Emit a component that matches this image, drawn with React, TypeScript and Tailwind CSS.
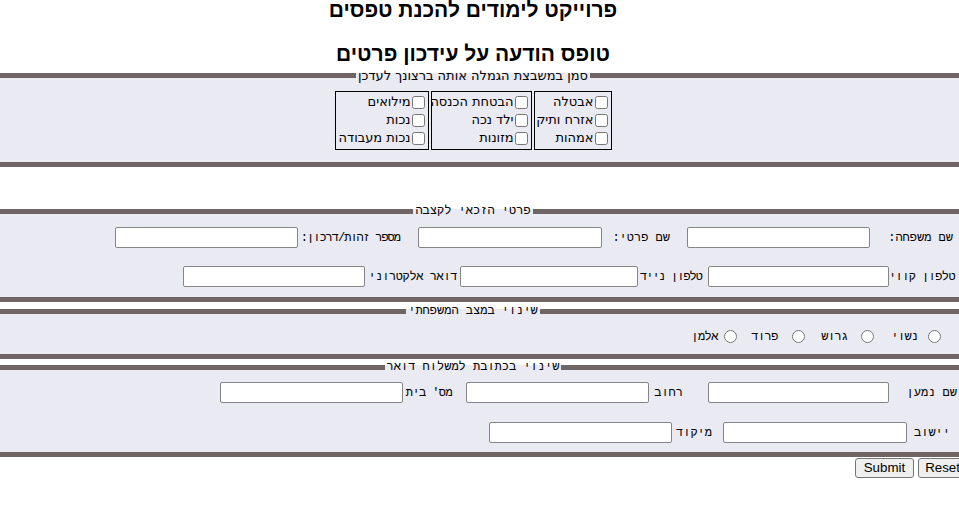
export default function App() {
  return (
    <div className="w-full h-[515px] overflow-hidden bg-white text-black">
      <div dir="rtl" className="w-[1014px] -ml-[34px]">
        <h1 className="-mt-[2px] text-center text-[21px] leading-[24px] font-bold font-['Liberation_Sans',Arial,sans-serif]">
          פרוייקט לימודים להכנת טפסים
        </h1>
        <h2 className="mt-[20px] text-center text-[21px] leading-[24px] font-bold font-['Liberation_Sans',Arial,sans-serif]">
          טופס הודעה על עידכון פרטים
        </h2>

        <form>
          <fieldset className="mt-[2px] border-x-0 border-y-[5px] border-[#6f6565] bg-[#eaeaf2]">
            <legend className="mx-auto px-[2px] text-[13px] leading-[15px] font-['DejaVu_Sans',sans-serif]">
              סמן במשבצת הגמלה אותה ברצונך לעדכן
            </legend>
            <div className="h-[79px] pt-[8px] flex justify-center gap-[2px] text-[13px] font-['DejaVu_Sans',sans-serif] whitespace-nowrap">
              <div className="w-[78px] h-[59px] border border-black pt-[1px]">
                <label className="flex h-[18px] items-center">
                  <input type="checkbox" className="w-[13px] h-[13px] mr-[3px] ml-[1px]" />
                  אבטלה
                </label>
                <label className="flex h-[18px] items-center">
                  <input type="checkbox" className="w-[13px] h-[13px] mr-[3px] ml-[1px]" />
                  אזרח ותיק
                </label>
                <label className="flex h-[18px] items-center">
                  <input type="checkbox" className="w-[13px] h-[13px] mr-[3px] ml-[1px]" />
                  אמהות
                </label>
              </div>
              <div className="w-[101px] h-[59px] border border-black pt-[1px]">
                <label className="flex h-[18px] items-center">
                  <input type="checkbox" className="w-[13px] h-[13px] mr-[3px] ml-[1px]" />
                  הבטחת הכנסה
                </label>
                <label className="flex h-[18px] items-center">
                  <input type="checkbox" className="w-[13px] h-[13px] mr-[3px] ml-[1px]" />
                  ילד נכה
                </label>
                <label className="flex h-[18px] items-center">
                  <input type="checkbox" className="w-[13px] h-[13px] mr-[3px] ml-[1px]" />
                  מזונות
                </label>
              </div>
              <div className="w-[94px] h-[59px] border border-black pt-[1px]">
                <label className="flex h-[18px] items-center">
                  <input type="checkbox" className="w-[13px] h-[13px] mr-[3px] ml-[1px]" />
                  מילואים
                </label>
                <label className="flex h-[18px] items-center">
                  <input type="checkbox" className="w-[13px] h-[13px] mr-[3px] ml-[1px]" />
                  נכות
                </label>
                <label className="flex h-[18px] items-center">
                  <input type="checkbox" className="w-[13px] h-[13px] mr-[3px] ml-[1px]" />
                  נכות מעבודה
                </label>
              </div>
            </div>
          </fieldset>

          <fieldset className="mt-[37px] border-x-0 border-y-[5px] border-[#6f6565] bg-[#eaeaf2] font-['Liberation_Mono',monospace] text-[12px] whitespace-nowrap">
            <legend className="mx-auto px-[2px] text-[12px] leading-[15px]">פרטי הזכאי לקצבה</legend>
            <div className="h-[78px] pt-[8px] pr-[21px]">
              <div className="flex h-[21px] items-center">
                <span className="w-[89px] pr-[6px]">שם משפחה:</span>
                <input type="text" className="w-[183px] h-[21px] border border-[#858585] rounded-[2px] bg-white" />
                <span className="w-[85px] pr-[17px]">שם פרטי:</span>
                <input type="text" className="w-[184px] h-[21px] border border-[#858585] rounded-[2px] bg-white" />
                <span className="w-[120px] pr-[18px] tracking-[-1px]">מספר זהות/דרכון:</span>
                <input type="text" className="w-[183px] h-[21px] border border-[#858585] rounded-[2px] bg-white" />
              </div>
              <div className="mt-[18px] flex h-[21px] items-center">
                <span className="w-[70px] pr-[4px] tracking-[-0.6px]">טלפון קווי</span>
                <input type="text" className="w-[181px] h-[21px] border border-[#858585] rounded-[2px] bg-white" />
                <span className="w-[70px] pr-[6px] tracking-[-1px]">טלפון נייד</span>
                <input type="text" className="w-[178px] h-[21px] border border-[#858585] rounded-[2px] bg-white" />
                <span className="w-[95px] pr-[3px] tracking-[-0.4px]">דואר אלקטרוני</span>
                <input type="text" className="w-[182px] h-[21px] border border-[#858585] rounded-[2px] bg-white" />
              </div>
            </div>
          </fieldset>

          <fieldset className="mt-[2px] border-x-0 border-y-[5px] border-[#6f6565] bg-[#eaeaf2] font-['Liberation_Mono',monospace] text-[12px] whitespace-nowrap">
            <legend className="mx-auto px-[2px] text-[12px] leading-[15px]">שינוי במצב המשפחתי</legend>
            <div className="h-[35px] pr-[39px] flex items-center">
              <input type="radio" name="status" className="w-[13px] h-[13px] m-0" />
              <span className="w-[54px] pr-[10px] tracking-[-0.5px]">נשוי</span>
              <input type="radio" name="status" className="w-[13px] h-[13px] m-0" />
              <span className="w-[56px] pr-[13px] tracking-[-0.5px]">גרוש</span>
              <input type="radio" name="status" className="w-[13px] h-[13px] m-0" />
              <span className="w-[55px] pr-[14px] tracking-[-0.5px]">פרוד</span>
              <input type="radio" name="status" className="w-[13px] h-[13px] m-0" />
              <span className="pr-[6px] tracking-[-0.5px]">אלמן</span>
            </div>
          </fieldset>

          <fieldset className="mt-[1px] border-x-0 border-y-[5px] border-[#6f6565] bg-[#eaeaf2] font-['Liberation_Mono',monospace] text-[12px] whitespace-nowrap">
            <legend className="mx-auto px-[2px] text-[12px] leading-[15px]">שינוי בכתובת למשלוח דואר</legend>
            <div className="h-[77px] pt-[7px] pr-[21px]">
              <div className="flex h-[21px] items-center">
                <span className="w-[70px] pr-[2px]">שם נמען</span>
                <input type="text" className="w-[181px] h-[21px] border border-[#858585] rounded-[2px] bg-white" />
                <span className="w-[59px] pr-[25px]">רחוב</span>
                <input type="text" className="w-[183px] h-[21px] border border-[#858585] rounded-[2px] bg-white" />
                <span className="w-[63px] pr-[14px] tracking-[-0.6px]">מס' בית</span>
                <input type="text" className="w-[183px] h-[21px] border border-[#858585] rounded-[2px] bg-white" />
              </div>
              <div className="mt-[19px] flex h-[21px] items-center">
                <span className="w-[52px] pr-[9px]">יישוב</span>
                <input type="text" className="w-[184px] h-[21px] border border-[#858585] rounded-[2px] bg-white" />
                <span className="w-[51px] pr-[11px]">מיקוד</span>
                <input type="text" className="w-[183px] h-[21px] border border-[#858585] rounded-[2px] bg-white" />
              </div>
            </div>
          </fieldset>

          <div className="pr-[13px] pt-[1px] flex gap-[4px] font-['Liberation_Sans',Arial,sans-serif] text-[13.33px]">
            <button type="reset" className="h-[20px] px-[6px] border border-[#767676] rounded-[3px] bg-[#efefef] leading-[16px]">
              Reset
            </button>
            <button type="submit" className="h-[20px] px-[8px] border border-[#767676] rounded-[3px] bg-[#efefef] leading-[16px]">
              Submit
            </button>
          </div>
        </form>
      </div>
    </div>
  );
}
